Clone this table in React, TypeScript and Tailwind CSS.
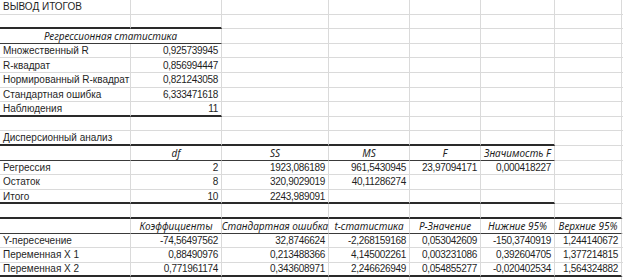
import clsx from "clsx";

type Align = "l" | "r" | "c";

interface Cell {
  t?: string;
  a?: Align;
  i?: boolean;
  noR?: boolean;
}

interface Row {
  cells: Cell[];
  thick?: number; // thick dark bottom border over first N columns
  thin?: number; // thin dark bottom border over first N columns
}

const COLS = ["w-[131px]", "w-[91px]", "w-[107px]", "w-[81px]", "w-[71px]", "w-[74px]", "w-[67px]"];

const L = (t: string): Cell => ({ t, a: "l" });
const R = (t: string): Cell => ({ t, a: "r" });
const H = (t: string): Cell => ({ t, a: "c", i: true });

const ROWS: Row[] = [
  { cells: [L("ВЫВОД ИТОГОВ")] },
  { cells: [], thick: 2 },
  { cells: [{ t: "Регрессионная статистика", a: "c", i: true, noR: true }], thin: 2 },
  { cells: [L("Множественный R"), R("0,925739945")] },
  { cells: [L("R-квадрат"), R("0,856994447")] },
  { cells: [L("Нормированный R-квадрат"), R("0,821243058")] },
  { cells: [L("Стандартная ошибка"), R("6,333471618")] },
  { cells: [L("Наблюдения"), R("11")], thick: 2 },
  { cells: [] },
  { cells: [L("Дисперсионный анализ")], thick: 6 },
  { cells: [{}, H("df"), H("SS"), H("MS"), H("F"), H("Значимость F")], thin: 6 },
  { cells: [L("Регрессия"), R("2"), R("1923,086189"), R("961,5430945"), R("23,97094171"), R("0,000418227")] },
  { cells: [L("Остаток"), R("8"), R("320,9029019"), R("40,11286274")] },
  { cells: [L("Итого"), R("10"), R("2243,989091")], thick: 6 },
  { cells: [], thick: 7 },
  {
    cells: [
      {},
      H("Коэффициенты"),
      H("Стандартная ошибка"),
      H("t-статистика"),
      H("P-Значение"),
      H("Нижние 95%"),
      H("Верхние 95%"),
    ],
    thin: 7,
  },
  {
    cells: [
      L("Y-пересечение"),
      R("-74,56497562"),
      R("32,8746624"),
      R("-2,268159168"),
      R("0,053042609"),
      R("-150,3740919"),
      R("1,244140672"),
    ],
  },
  {
    cells: [
      L("Переменная X 1"),
      R("0,88490976"),
      R("0,213488366"),
      R("4,145002261"),
      R("0,003231086"),
      R("0,392604705"),
      R("1,377214815"),
    ],
  },
  {
    cells: [
      L("Переменная X 2"),
      R("0,771961174"),
      R("0,343608971"),
      R("2,246626949"),
      R("0,054855277"),
      R("-0,020402534"),
      R("1,564324882"),
    ],
    thick: 7,
  },
  { cells: [] },
];

function SheetRow({ row }: { row: Row }) {
  return (
    <div className="flex h-[14.6px]">
      {COLS.map((w, c) => {
        const cell = row.cells[c] ?? {};
        const thick = row.thick !== undefined && c < row.thick;
        const thin = row.thin !== undefined && c < row.thin;
        return (
          <div
            key={c}
            className={clsx(
              w,
              "shrink-0 flex items-center px-[3px] pt-[1px] whitespace-nowrap",
              cell.noR ? "border-r-0" : "border-r border-r-[#dadada]",
              thick
                ? "border-b-2 border-b-[#2a2a2a]"
                : thin
                  ? "border-b border-b-[#3a3a3a]"
                  : "border-b border-b-[#dadada]",
              cell.a === "r" && "justify-end",
              cell.a === "c" && "justify-center",
            )}
          >
            {cell.t && (
              <span
                className={clsx(
                  "leading-none",
                  cell.i && "italic font-['Noto_Sans',sans-serif] text-[10px]",
                  cell.a === "r" && "tracking-[-0.3px]",
                  cell.noR && "relative left-[45px]",
                )}
              >
                {cell.t}
              </span>
            )}
          </div>
        );
      })}
      <div className="flex-1 border-b border-b-[#dadada]" />
    </div>
  );
}

export default function App() {
  return (
    <div className="w-[623px] h-[280px] overflow-hidden bg-white text-[10px] text-[#1f1f1f] font-['Liberation_Sans',Arial,sans-serif]">
      {ROWS.map((r, i) => (
        <SheetRow key={i} row={r} />
      ))}
    </div>
  );
}
